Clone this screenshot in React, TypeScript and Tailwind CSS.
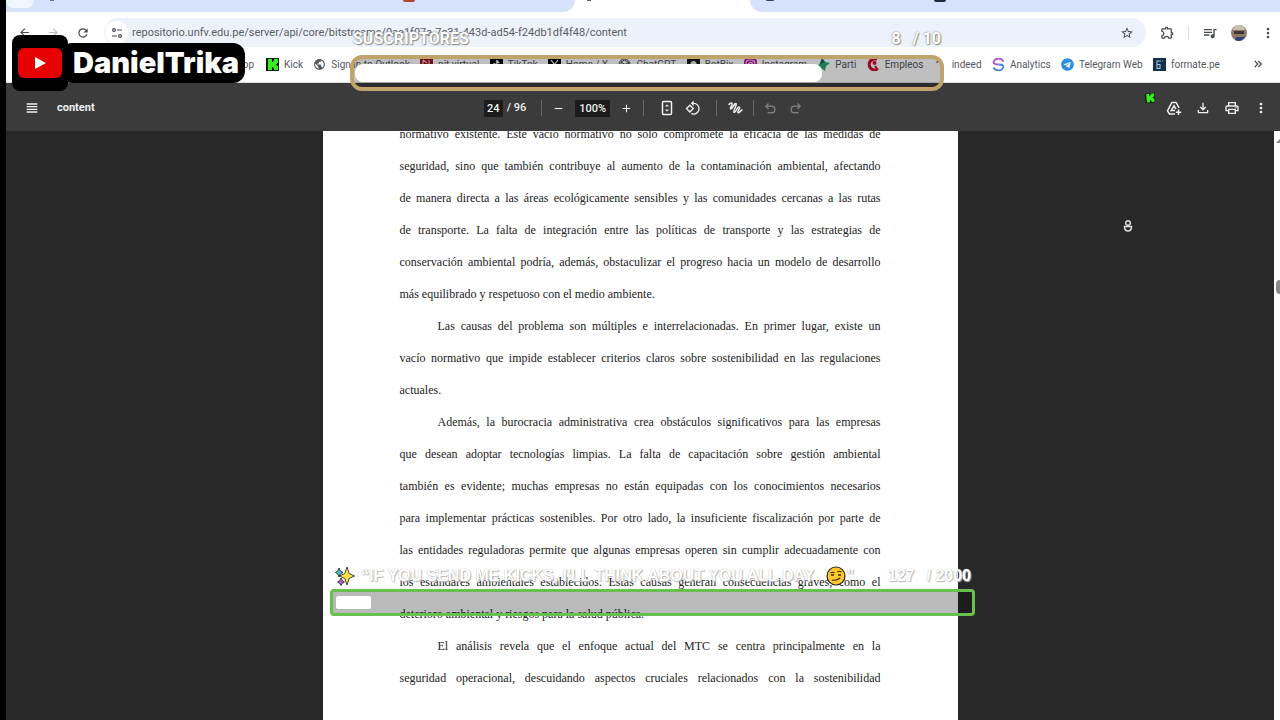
import { ReactNode } from 'react'
import {
  MdAdd,
  MdArrowBack,
  MdArrowForward,
  MdMoreVert,
  MdOutlineExtension,
  MdOutlineFileDownload,
  MdOutlinePrint,
  MdPublic,
  MdQueueMusic,
  MdRefresh,
  MdRemove,
  MdRotate90DegreesCcw,
  MdStarBorder,
  MdViewHeadline,
} from 'react-icons/md'
import { FaInstagram, FaTelegram, FaTiktok } from 'react-icons/fa'

interface Bookmark {
  label: string
  icon: ReactNode
}

interface Line {
  text: string
  indent?: boolean
  last?: boolean
}

const bookmarks: Bookmark[] = [
  { label: 'Kick', icon: <KickIcon className="size-[13px]" /> },
  { label: 'Sign in to Outlook', icon: <MdPublic className="size-[13px] text-[#55585c]" /> },
  {
    label: 'pit virtual',
    icon: (
      <svg viewBox="0 0 13 13" className="size-[13px]">
        <rect width="13" height="13" fill="#a30f22" />
        <path d="M3 2v6M3 2l4 3M9 2v5" stroke="#e7b9bf" strokeWidth="1.2" fill="none" />
      </svg>
    ),
  },
  {
    label: 'TikTok',
    icon: (
      <span className="flex size-[13px] items-center justify-center bg-black text-white">
        <FaTiktok className="size-2" />
      </span>
    ),
  },
  {
    label: 'Home / X',
    icon: (
      <svg viewBox="0 0 13 13" className="size-[13px]">
        <rect width="13" height="13" fill="#000" />
        <path d="M3 2l7 9M10 2l-7 9" stroke="#fff" strokeWidth="1.2" />
      </svg>
    ),
  },
  {
    label: 'ChatGPT',
    icon: (
      <svg viewBox="0 0 13 13" className="size-[13px]" fill="none" stroke="#444" strokeWidth="1">
        <circle cx="6.5" cy="6.5" r="5.5" />
        <path d="M3 4l3.500-2 4 2.500v4l-3.500 2.500-4-2.500zM3 4l4 2.500 3.500-2M7 6.500v4.500" />
      </svg>
    ),
  },
  {
    label: 'BotBix',
    icon: (
      <svg viewBox="0 0 13 13" className="size-[13px]">
        <rect width="13" height="13" fill="#1c1c1c" />
        <path d="M3 9c0-5 2-6 3.500-6S10 4 10 9z" fill="#e8e8e8" />
      </svg>
    ),
  },
  {
    label: 'Instagram',
    icon: (
      <span className="flex size-[13px] items-center justify-center rounded-sm bg-[#b5179e] text-white">
        <FaInstagram className="size-[11px]" />
      </span>
    ),
  },
  {
    label: 'Parti',
    icon: (
      <svg viewBox="0 0 13 13" className="size-[13px]">
        <path d="M5 0l3 4 5 1-4 3-1 5-4-3-4-1 3-4z" fill="#2aa876" />
        <path d="M5 0l3 4-5 2z" fill="#176a52" />
      </svg>
    ),
  },
  {
    label: 'Empleos',
    icon: (
      <svg viewBox="0 0 13 13" className="size-[13px]">
        <path d="M10 1.500a5.500 5.500 0 1 0 0 10" stroke="#c8102e" strokeWidth="3" fill="none" />
        <circle cx="7.500" cy="5" r="2" fill="#c8102e" />
        <path d="M8 8l3 4" stroke="#c8102e" strokeWidth="2" />
      </svg>
    ),
  },
  {
    label: 'indeed',
    icon: (
      <svg viewBox="0 0 13 13" className="size-[13px]">
        <path d="M3 5c0-3 2-4 4-3" stroke="#3b5560" strokeWidth="1.200" fill="none" />
        <circle cx="7" cy="3" r="1.200" fill="#3b5560" />
      </svg>
    ),
  },
  {
    label: 'Analytics',
    icon: (
      <svg viewBox="0 0 13 13" className="size-[13px]" fill="none" strokeWidth="1.800">
        <path d="M11.500 3.500A5.500 5.500 0 0 0 1.500 4c0 2.500 3 2.500 5 2.500" stroke="#b34fd0" />
        <path d="M1.500 9.500a5.500 5.500 0 0 0 10-.5c0-2.500-3-2.500-5-2.500" stroke="#4d86e0" />
      </svg>
    ),
  },
  { label: 'Telegram Web', icon: <FaTelegram className="size-[13px] text-[#2f8fdc]" /> },
  {
    label: 'formate.pe',
    icon: (
      <svg viewBox="0 0 13 13" className="size-[13px]">
        <rect width="13" height="13" fill="#12304a" />
        <path d="M4 11V3h4M4 6.500h3v4h-3M9 3h1" stroke="#a9c3d6" strokeWidth="1.100" fill="none" />
      </svg>
    ),
  },
]

const lines: Line[] = [
  { text: 'normativo existente. Este vacío normativo no solo compromete la eficacia de las medidas de' },
  { text: 'seguridad, sino que también contribuye al aumento de la contaminación ambiental, afectando' },
  { text: 'de manera directa a las áreas ecológicamente sensibles y las comunidades cercanas a las rutas' },
  { text: 'de transporte. La falta de integración entre las políticas de transporte y las estrategias de' },
  { text: 'conservación ambiental podría, además, obstaculizar el progreso hacia un modelo de desarrollo' },
  { text: 'más equilibrado y respetuoso con el medio ambiente.', last: true },
  { text: 'Las causas del problema son múltiples e interrelacionadas. En primer lugar, existe un', indent: true },
  { text: 'vacío normativo que impide establecer criterios claros sobre sostenibilidad en las regulaciones' },
  { text: 'actuales.', last: true },
  { text: 'Además, la burocracia administrativa crea obstáculos significativos para las empresas', indent: true },
  { text: 'que desean adoptar tecnologías limpias. La falta de capacitación sobre gestión ambiental' },
  { text: 'también es evidente; muchas empresas no están equipadas con los conocimientos necesarios' },
  { text: 'para implementar prácticas sostenibles. Por otro lado, la insuficiente fiscalización por parte de' },
  { text: 'las entidades reguladoras permite que algunas empresas operen sin cumplir adecuadamente con' },
  { text: 'los estándares ambientales establecidos. Estas causas generan consecuencias graves, como el' },
  { text: 'deterioro ambiental y riesgos para la salud pública.', last: true },
  { text: 'El análisis revela que el enfoque actual del MTC se centra principalmente en la', indent: true },
  { text: 'seguridad operacional, descuidando aspectos cruciales relacionados con la sostenibilidad' },
]

function KickIcon({ className }: { className: string }) {
  return (
    <svg viewBox="0 0 13 13" className={className}>
      <rect width="13" height="13" fill="#0b1a06" />
      <path d="M2 1h4v3h1V3h1V1h4v4h-1v1h-1v1h1v1h1v4H8v-2H7V9H6v3H2z" fill="#35f01c" />
    </svg>
  )
}

function TabStrip() {
  return (
    <div className="flex h-3 bg-white">
      <div className="flex w-[569px] items-start rounded-br-xl bg-[#d6e2fb]">
        <span className="h-2 w-7 rounded-b-full bg-[#f1f5fe]" />
        <span className="ml-4 h-px w-1 bg-[#6b7280]" />
        <span className="ml-auto mr-40 h-0.5 w-3 rounded-b bg-[#b0452f]" />
      </div>
      <div className="flex w-[175px] items-start pl-3">
        <span className="h-px w-1 bg-[#5b5f66]" />
      </div>
      <div className="flex flex-1 items-start rounded-bl-xl bg-[#d6e2fb] pl-3">
        <span className="ml-1 h-px w-2 rounded-b bg-[#3b4250]" />
        <span className="ml-40 h-0.5 w-3 rounded-b bg-[#1f2a3a]" />
      </div>
    </div>
  )
}

function AddressBar() {
  return (
    <div className="flex h-10 items-center bg-white pr-1 pt-px text-[#474b52]">
      <div className="flex w-[98px] items-center gap-4 pl-3">
        <button aria-label="Back">
          <MdArrowBack className="size-[13px]" />
        </button>
        <button aria-label="Forward" className="text-[#b9bcc2]">
          <MdArrowForward className="size-[13px]" />
        </button>
        <button aria-label="Reload">
          <MdRefresh className="size-[14px]" />
        </button>
      </div>
      <div className="flex h-[29px] flex-1 items-center gap-1 rounded-full bg-[#edf1fa] pl-px pr-3">
        <button aria-label="Site information" className="flex size-[23px] items-center justify-center rounded-full bg-white">
          <svg viewBox="0 0 12 12" className="size-3" fill="none" stroke="currentColor" strokeWidth="1.2">
            <circle cx="3" cy="3" r="1.400" />
            <path d="M6 3h5M1 9h5" />
            <circle cx="9" cy="9" r="1.400" />
          </svg>
        </button>
        <input
          aria-label="Address"
          className="min-w-0 flex-1 bg-transparent pt-0.5 font-['Roboto',sans-serif] text-[11px] text-[#5a5e66] outline-none"
          defaultValue="repositorio.unfv.edu.pe/server/api/core/bitstreams/0ae1f07a-7c31-443d-ad54-f24db1df4f48/content"
        />
        <button aria-label="Bookmark this page">
          <MdStarBorder className="size-[14px]" />
        </button>
      </div>
      <div className="flex items-center gap-[13px] pl-3.5">
        <button aria-label="Extensions">
          <MdOutlineExtension className="size-[15px]" />
        </button>
        <span className="h-3.5 w-px bg-[#d5dbe8]" />
        <button aria-label="Media">
          <MdQueueMusic className="size-4" />
        </button>
        <button aria-label="Profile">
          <svg viewBox="0 0 16 16" className="size-4">
            <circle cx="8" cy="8" r="8" fill="#8d7b68" />
            <path d="M2 5a6 5 0 0 1 12 0z" fill="#c9bfae" />
            <path d="M3 6h10v3H3z" fill="#3c3531" />
            <path d="M5 12h6l3-1a8 8 0 0 1-6 5 8 8 0 0 1-4-1z" fill="#2c3f7c" />
          </svg>
        </button>
        <button aria-label="Browser menu">
          <MdMoreVert className="size-4" />
        </button>
      </div>
    </div>
  )
}

function BookmarksBar() {
  return (
    <nav className="flex h-[31px] items-center border-b border-[#d9dce1] bg-white pb-1.5 font-['Roboto',sans-serif] text-[10px] text-[#55595f]">
      <a href="#" className="w-[260px] pr-3 text-right">
        WhatsApp
      </a>
      <div className="flex flex-1 items-center justify-between">
        {bookmarks.map((b) => (
          <a key={b.label} href="#" className="flex items-center gap-[5px] whitespace-nowrap">
            {b.icon}
            {b.label}
          </a>
        ))}
      </div>
      <button aria-label="More bookmarks" className="flex w-[60px] justify-end pr-[18px]">
        <svg viewBox="0 0 8 8" className="size-2" fill="none" stroke="#45484d" strokeWidth="1.200">
          <path d="M.8 1l3 3-3 3M4.300 1l3 3-3 3" />
        </svg>
      </button>
    </nav>
  )
}

function PdfToolbar() {
  return (
    <div className="grid h-12 grid-cols-[1fr_auto_1fr] items-center bg-[#3b3b3b] pt-0.5 font-['Roboto',sans-serif] text-[11px] font-medium text-[#f1f1f1]">
      <div className="flex items-center gap-[17px] pl-[18px]">
        <button aria-label="Menu">
          <MdViewHeadline className="size-4" />
        </button>
        <h1 className="pt-px font-bold">content</h1>
      </div>
      <div className="flex items-center">
        <input
          aria-label="Page number"
          defaultValue="24"
          className="h-[17px] w-[19px] bg-[#1c1c1c] text-center outline-none"
        />
        <span className="ml-1">/ 96</span>
        <span className="ml-[15px] mr-2.5 h-4 w-px bg-[#666]" />
        <button aria-label="Zoom out">
          <MdRemove className="size-[13px]" />
        </button>
        <input
          aria-label="Zoom level"
          defaultValue="100%"
          className="mx-2.5 h-[17px] w-[35px] bg-[#1c1c1c] text-center outline-none"
        />
        <button aria-label="Zoom in">
          <MdAdd className="size-[13px]" />
        </button>
        <span className="ml-2.5 mr-[15px] h-4 w-px bg-[#666]" />
        <button aria-label="Fit to page">
          <svg viewBox="0 0 16 16" className="size-4" fill="none" stroke="currentColor" strokeWidth="1.500">
            <rect x="3.500" y="1.500" width="9" height="13" rx="1" />
            <path d="M6.500 6.200L8 4.700l1.500 1.500zM6.500 9.800L8 11.300l1.500-1.500z" fill="currentColor" strokeWidth=".5" />
          </svg>
        </button>
        <button aria-label="Rotate" className="ml-2.5">
          <MdRotate90DegreesCcw className="size-4" />
        </button>
        <span className="mx-[15px] mr-2.5 h-4 w-px bg-[#666]" />
        <button aria-label="Draw">
          <svg viewBox="0 0 16 16" className="size-4" fill="none" stroke="currentColor" strokeWidth="1.500" strokeLinecap="round">
            <path d="M2 4.500C3.500 2.500 5.500 2.500 5 4.500S2.500 8.500 4 9 7.500 2.500 9 3.500 5.800 10.500 7.200 12.200" />
            <path d="M7.200 12.200C9 13 10 6.500 12 7s-2 4.500-1 5.500 2.500-2 4-2.500" />
          </svg>
        </button>
        <span className="mx-2.5 h-4 w-px bg-[#666]" />
        <button aria-label="Undo" className="text-[#7b7b7b]">
          <svg viewBox="0 0 13 13" className="size-[13px]" fill="none" stroke="currentColor" strokeWidth="1.400">
            <path d="M4.500 1.500L1.800 4.300l2.700 2.800M2 4.300h5.700a3.200 3.200 0 0 1 0 6.400H3.500" />
          </svg>
        </button>
        <button aria-label="Redo" className="ml-3 text-[#7b7b7b]">
          <svg viewBox="0 0 13 13" className="size-[13px]" fill="none" stroke="currentColor" strokeWidth="1.400">
            <path d="M8.500 1.500l2.700 2.800-2.700 2.800M11 4.300H5.300a3.200 3.200 0 0 0 0 6.400h4.200" />
          </svg>
        </button>
      </div>
      <div className="flex items-center justify-end gap-[13px] pr-[11px]">
        <KickIcon className="-mr-0.5 mb-5 size-2.5 -rotate-6" />
        <button aria-label="Save to Drive">
          <svg viewBox="0 0 16 16" className="size-4" fill="none" stroke="currentColor" strokeWidth="1.500">
            <path d="M9 14H3.500L1.500 10.800 5.800 2.500h4.400L13 7.800" strokeLinejoin="round" />
            <path d="M9 10.500H5.200L8 5.800l2 3.400" />
            <path d="M12.500 9.500v5.500M9.800 12.200h5.500" />
          </svg>
        </button>
        <button aria-label="Download">
          <MdOutlineFileDownload className="size-4" />
        </button>
        <button aria-label="Print">
          <MdOutlinePrint className="size-4" />
        </button>
        <button aria-label="More actions">
          <MdMoreVert className="size-4" />
        </button>
      </div>
    </div>
  )
}

function Document() {
  return (
    <main className="flex min-h-0 flex-1 bg-[#282828]">
      <div className="flex flex-1 justify-center overflow-hidden">
        <article className="w-[635px] bg-white px-[77px] font-['Liberation_Serif',serif] text-xs leading-8 text-[#222]">
          <div className="-mt-[13px]">
            {lines.map((line) => (
              <p
                key={line.text}
                className={`whitespace-nowrap ${line.indent ? 'pl-[38px]' : ''} ${
                  line.last ? '' : '[text-align-last:justify]'
                }`}
              >
                {line.text}
              </p>
            ))}
          </div>
        </article>
      </div>
      <div className="flex w-1.5 flex-col items-end bg-[#fcfcfc]">
        <span className="mt-2 h-1 w-1 bg-[#8a8a8a] [clip-path:polygon(100%_0,100%_100%,0_100%)]" />
        <span className="mt-[137px] h-3.5 w-1 rounded-l bg-[#8b8b8b]" />
      </div>
    </main>
  )
}

// stream graphics that float over the captured window
function ChannelBadge() {
  return (
    <div className="absolute left-3 top-[35px] flex items-center">
      <div className="z-10 flex h-14 w-14 items-center justify-center rounded-lg bg-black">
        <svg viewBox="0 0 44 30" className="h-[30px] w-11">
          <rect width="44" height="30" rx="6" fill="#e60000" />
          <path d="M17 9l11 6-11 6z" fill="#fff" />
        </svg>
      </div>
      <div className="-ml-2 flex h-10 items-center rounded-xl bg-black pl-[13px] pr-1.5 font-['Inter',sans-serif] text-[29px] font-black text-white">
        DanielTrika
      </div>
    </div>
  )
}

function SubscriberGoal() {
  const percent = (8 / 10) * 100
  return (
    <div className="absolute left-[350px] top-[23px] w-[594px]">
      <div className="flex h-8 items-center justify-between px-[3px] font-['Roboto',sans-serif] text-base font-bold text-white [text-shadow:0_0_2px_#777,1px_1px_1px_#999]">
        <span>SUSCRIPTORES</span>
        <span className="flex gap-3">
          <span>8</span>
          <span>/ 10</span>
        </span>
      </div>
      <div
        role="progressbar"
        aria-valuenow={percent}
        className="flex h-9 items-start rounded-xl border-4 border-[#c0a26b] bg-black/25 px-px pt-[5px]"
      >
        <div className="h-[18px] rounded-lg bg-white" style={{ width: `${percent}%` }} />
      </div>
    </div>
  )
}

function KicksGoal() {
  const percent = 5.6
  return (
    <div className="absolute left-[330px] top-[563px] w-[645px]">
      <div className="flex h-[26px] items-center justify-between pl-[5px] pr-1 font-['Liberation_Sans',sans-serif] text-base font-bold text-white [text-shadow:0_0_1px_#aaa,1px_1px_1px_#bbb]">
        <span className="flex items-center whitespace-nowrap">
          <svg viewBox="0 0 20 20" className="mr-1.5 size-5" stroke="#1b1b1b" strokeWidth=".8">
            <path d="M12 1l2.200 6.500L19.500 10l-5.300 2.500L12 19l-2.200-6.500L4.500 10l5.300-2.500z" fill="#ffe14a" />
            <path d="M4 2l1.200 3L8 6.500 5.200 8 4 11 2.800 8 .5 6.500 2.800 5z" fill="#4fc3d9" />
            <path d="M6 12l1.200 2.500L9.500 16l-2.300 1.500L6 19.500l-1.200-2L2.500 16l2.300-1.500z" fill="#b45fc9" />
          </svg>
          “IF YOU SEND ME KICKS, I'LL THINK ABOUT YOU ALL DAY
          <svg viewBox="0 0 20 20" className="ml-3 size-5">
            <circle cx="10" cy="10" r="9" fill="#fdc72e" stroke="#2b2415" strokeWidth="1.200" />
            <path d="M4.500 7q2-1.500 4 0M11.500 6q2-1.500 4 0M6 14q5 1 8-2" stroke="#3b2c10" strokeWidth="1.200" fill="none" />
            <path d="M5 9h3M12 9h3" stroke="#3b2c10" strokeWidth="1.600" />
          </svg>
          ”
        </span>
        <span className="flex gap-3">
          <span>127</span>
          <span>/ 2000</span>
        </span>
      </div>
      <div
        role="progressbar"
        aria-valuenow={percent}
        className="flex h-[27px] items-center rounded border-3 border-[#68c04f] bg-black/27 px-[3px]"
      >
        <div className="h-[13px] rounded-xs bg-white" style={{ width: `${percent}%` }} />
      </div>
    </div>
  )
}

export default function App() {
  return (
    <div className="relative flex h-screen flex-col overflow-hidden border-l-6 border-black bg-white font-['Open_Sans',sans-serif]">
      <TabStrip />
      <AddressBar />
      <BookmarksBar />
      <PdfToolbar />
      <Document />
      <div className="pointer-events-none absolute inset-0 -left-1.5">
        <SubscriberGoal />
        <ChannelBadge />
        <KicksGoal />
        <svg viewBox="0 0 10 14" className="absolute left-[1123px] top-[219px] h-3.5 w-2.5" fill="none" stroke="#ddd" strokeWidth="1.500">
          <circle cx="5" cy="4" r="2.300" />
          <path d="M1.500 7.500h7c0 3-1.500 4.500-3.500 4.500s-3.500-1.500-3.500-4.500z" />
        </svg>
      </div>
    </div>
  )
}
